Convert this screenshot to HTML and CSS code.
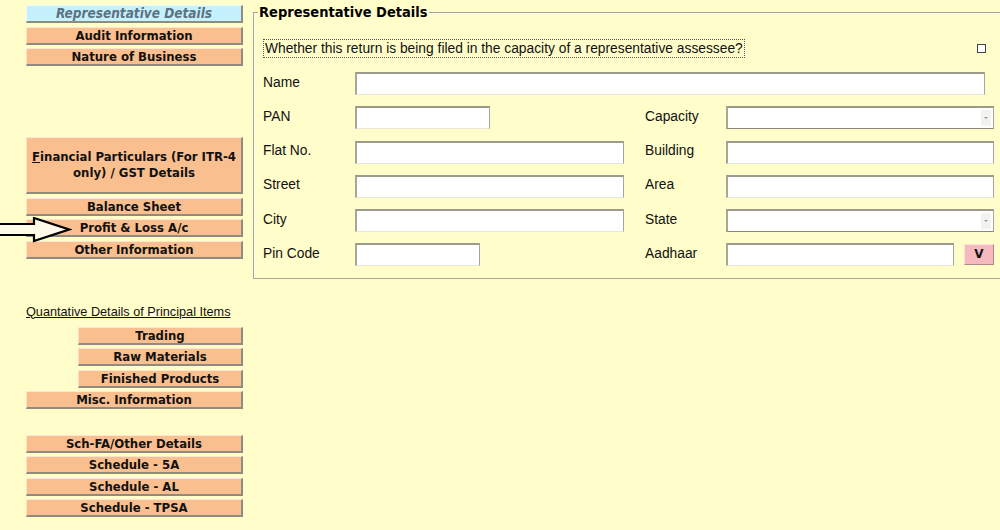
FILE: index.html
```html
<!DOCTYPE html>
<html>
<head>
<meta charset="utf-8">
<link rel="stylesheet" href="styles.css">
</head>
<body>
<div class="page">
  <nav class="side">
    <div class="btn btn-active">Representative Details</div>
    <div class="btn g1">Audit Information</div>
    <div class="btn g1">Nature of Business</div>
    <div class="btn btn-tall"><span><u>F</u>inancial Particulars (For ITR-4 only) / GST Details</span></div>
    <div class="btn g1">Balance Sheet</div>
    <div class="btn g1">Profit &amp; Loss A/c</div>
    <div class="btn g1">Other Information</div>
    <div class="quant">Quantative Details of Principal Items</div>
    <div class="btn sub">Trading</div>
    <div class="btn sub g1">Raw Materials</div>
    <div class="btn sub g1">Finished Products</div>
    <div class="btn g1">Misc. Information</div>
    <div class="btn sch">Sch-FA/Other Details</div>
    <div class="btn g1">Schedule - 5A</div>
    <div class="btn g1">Schedule - AL</div>
    <div class="btn g1">Schedule - TPSA</div>
  </nav>
  <svg class="arrow" width="72" height="26" viewBox="0 0 72 26">
    <path d="M-2 7 H34 V1 L69 12.5 L34 24 V18 H-2 Z" fill="#fffbe8" stroke="#000" stroke-width="2.2" stroke-linejoin="miter"/>
  </svg>
  <main class="main">
    <fieldset class="panel">
      <legend>Representative Details</legend>
      <div class="question">
        <span class="qtext">Whether this return is being filed in the capacity of a representative assessee?</span>
        <span class="check"></span>
      </div>
      <div class="row">
        <label class="lbl">Name</label>
        <div class="inp w-name"></div>
      </div>
      <div class="row">
        <label class="lbl">PAN</label>
        <div class="inp w-pan"></div>
        <label class="lbl lbl2">Capacity</label>
        <div class="inp sel w-right"><span class="caret"></span></div>
      </div>
      <div class="row">
        <label class="lbl">Flat No.</label>
        <div class="inp w-mid"></div>
        <label class="lbl lbl2">Building</label>
        <div class="inp w-right"></div>
      </div>
      <div class="row">
        <label class="lbl">Street</label>
        <div class="inp w-mid"></div>
        <label class="lbl lbl2">Area</label>
        <div class="inp w-right"></div>
      </div>
      <div class="row">
        <label class="lbl">City</label>
        <div class="inp w-mid"></div>
        <label class="lbl lbl2">State</label>
        <div class="inp sel w-right"><span class="caret"></span></div>
      </div>
      <div class="row">
        <label class="lbl">Pin Code</label>
        <div class="inp w-pin"></div>
        <label class="lbl lbl2">Aadhaar</label>
        <div class="inp w-aad"></div>
        <div class="vbtn">V</div>
      </div>
    </fieldset>
  </main>
</div>
</body>
</html>
```

FILE: styles.css
```css
html, body {
  margin: 0;
  padding: 0;
  background: #fffdc9;
  width: 1000px;
  height: 530px;
  overflow: hidden;
}
.page {
  position: relative;
  display: flex;
  align-items: flex-start;
  width: 1000px;
}
.side {
  flex: 0 0 217px;
  width: 217px;
  margin-left: 26px;
  padding-top: 5px;
  display: flex;
  flex-direction: column;
  align-items: stretch;
}
.btn {
  height: 15px;
  background: #fabf8e;
  border-top: 1px solid #fde7d2;
  border-left: 1px solid #fde0c6;
  border-right: 2px solid #8f8a82;
  border-bottom: 2px solid #8f8a82;
  box-sizing: content-box;
  font-family: "DejaVu Sans Condensed", "DejaVu Sans", sans-serif;
  font-stretch: condensed;
  font-weight: bold;
  font-size: 13px;
  line-height: 15px;
  color: #111;
  text-align: center;
  white-space: nowrap;
}
.btn-active {
  background: #c4f1fc;
  border-top-color: #e8fbff;
  border-left-color: #e8fbff;
  font-style: italic;
  color: #5d7281;
  font-size: 13.5px;
}
.g1 { margin-top: 3.5px; }
.btn-tall {
  margin-top: 71px;
  height: 54px;
  display: flex;
  align-items: center;
  justify-content: center;
  white-space: normal;
  line-height: 16px;
}
.btn-tall span { display: block; width: 212px; }
.btn-tall + .btn { margin-top: 3.5px; }
.quant {
  margin-top: 46px;
  font-family: "Liberation Sans", Arial, sans-serif;
  font-size: 12.7px;
  line-height: 14px;
  color: #111;
  text-decoration: underline;
  white-space: nowrap;
}
.sub { margin-left: 52px; }
.quant + .btn { margin-top: 8px; }
.sch { margin-top: 25.5px; }
.arrow {
  position: absolute;
  left: 0;
  top: 217px;
}
.main {
  flex: 1 1 auto;
  min-width: 0;
  margin-left: 10px;
}
.panel {
  box-sizing: border-box;
  width: 100%;
  margin: 4px 0 0 0;
  padding: 0 0 12px 9px;
  border: 1px solid #a8a596;
  border-right: none;
  box-shadow: inset 1px 1px 0 #fffff0;
  min-width: 0;
}
.panel legend {
  padding: 0 1px;
  margin-left: -5px;
  font-family: "DejaVu Sans Condensed", "DejaVu Sans", sans-serif;
  font-stretch: condensed;
  font-weight: bold;
  font-size: 14.5px;
  line-height: 17px;
  color: #000;
}
.question {
  display: flex;
  align-items: center;
  height: 20px;
  margin-top: 17px;
  width: 723px;
}
.qtext {
  border: 1px dotted #555;
  padding: 0 1px;
  font-family: "Liberation Sans", Arial, sans-serif;
  font-size: 13.8px;
  line-height: 17px;
  color: #111;
  white-space: nowrap;
}
.check {
  margin-left: auto;
  width: 7px;
  height: 7px;
  border: 1px solid #444;
  background: #fff;
}
.row {
  display: flex;
  align-items: center;
  height: 23px;
  margin-top: 11.3px;
}
.question + .row { margin-top: 14px; }
.lbl {
  width: 92px;
  padding-bottom: 3px;
  font-family: "Liberation Sans", Arial, sans-serif;
  font-size: 13.8px;
  color: #111;
  white-space: nowrap;
}
.lbl2 {
  width: 81px;
}
.inp {
  background: #fff;
  border-top: 2px solid #9c9a8c;
  border-left: 2px solid #a8a696;
  border-right: 1px solid #a8a696;
  border-bottom: 1px solid #e8e6d6;
  position: relative;
  box-sizing: border-box;
  height: 23px;
  flex: 0 0 auto;
}
.w-name { width: 630px; }
.w-pan { width: 135px; margin-right: 155px; }
.w-mid { width: 269px; margin-right: 21px; }
.w-pin { width: 125px; margin-right: 165px; }
.w-right { width: 268px; }
.w-aad { width: 228px; }
.sel { border-bottom-color: #8a887c; }
.caret {
  position: absolute;
  right: 2px;
  top: 2px;
  width: 10px;
  height: 16px;
  background: #f2f2ee;
}
.caret::after {
  content: "";
  position: absolute;
  left: 3px;
  top: 7px;
  border-left: 2px solid transparent;
  border-right: 2px solid transparent;
  border-top: 2px solid #999;
}
.vbtn {
  flex: 0 0 auto;
  margin-left: 10px;
  width: 28px;
  height: 19px;
  background: #f6b9bd;
  border-top: 1px solid #fbe0e0;
  border-left: 1px solid #fbe0e0;
  border-right: 1px solid #b08a8a;
  border-bottom: 1px solid #b08a8a;
  font-family: "DejaVu Sans", sans-serif;
  font-weight: bold;
  font-size: 12px;
  line-height: 19px;
  text-align: center;
  color: #111;
}
```
